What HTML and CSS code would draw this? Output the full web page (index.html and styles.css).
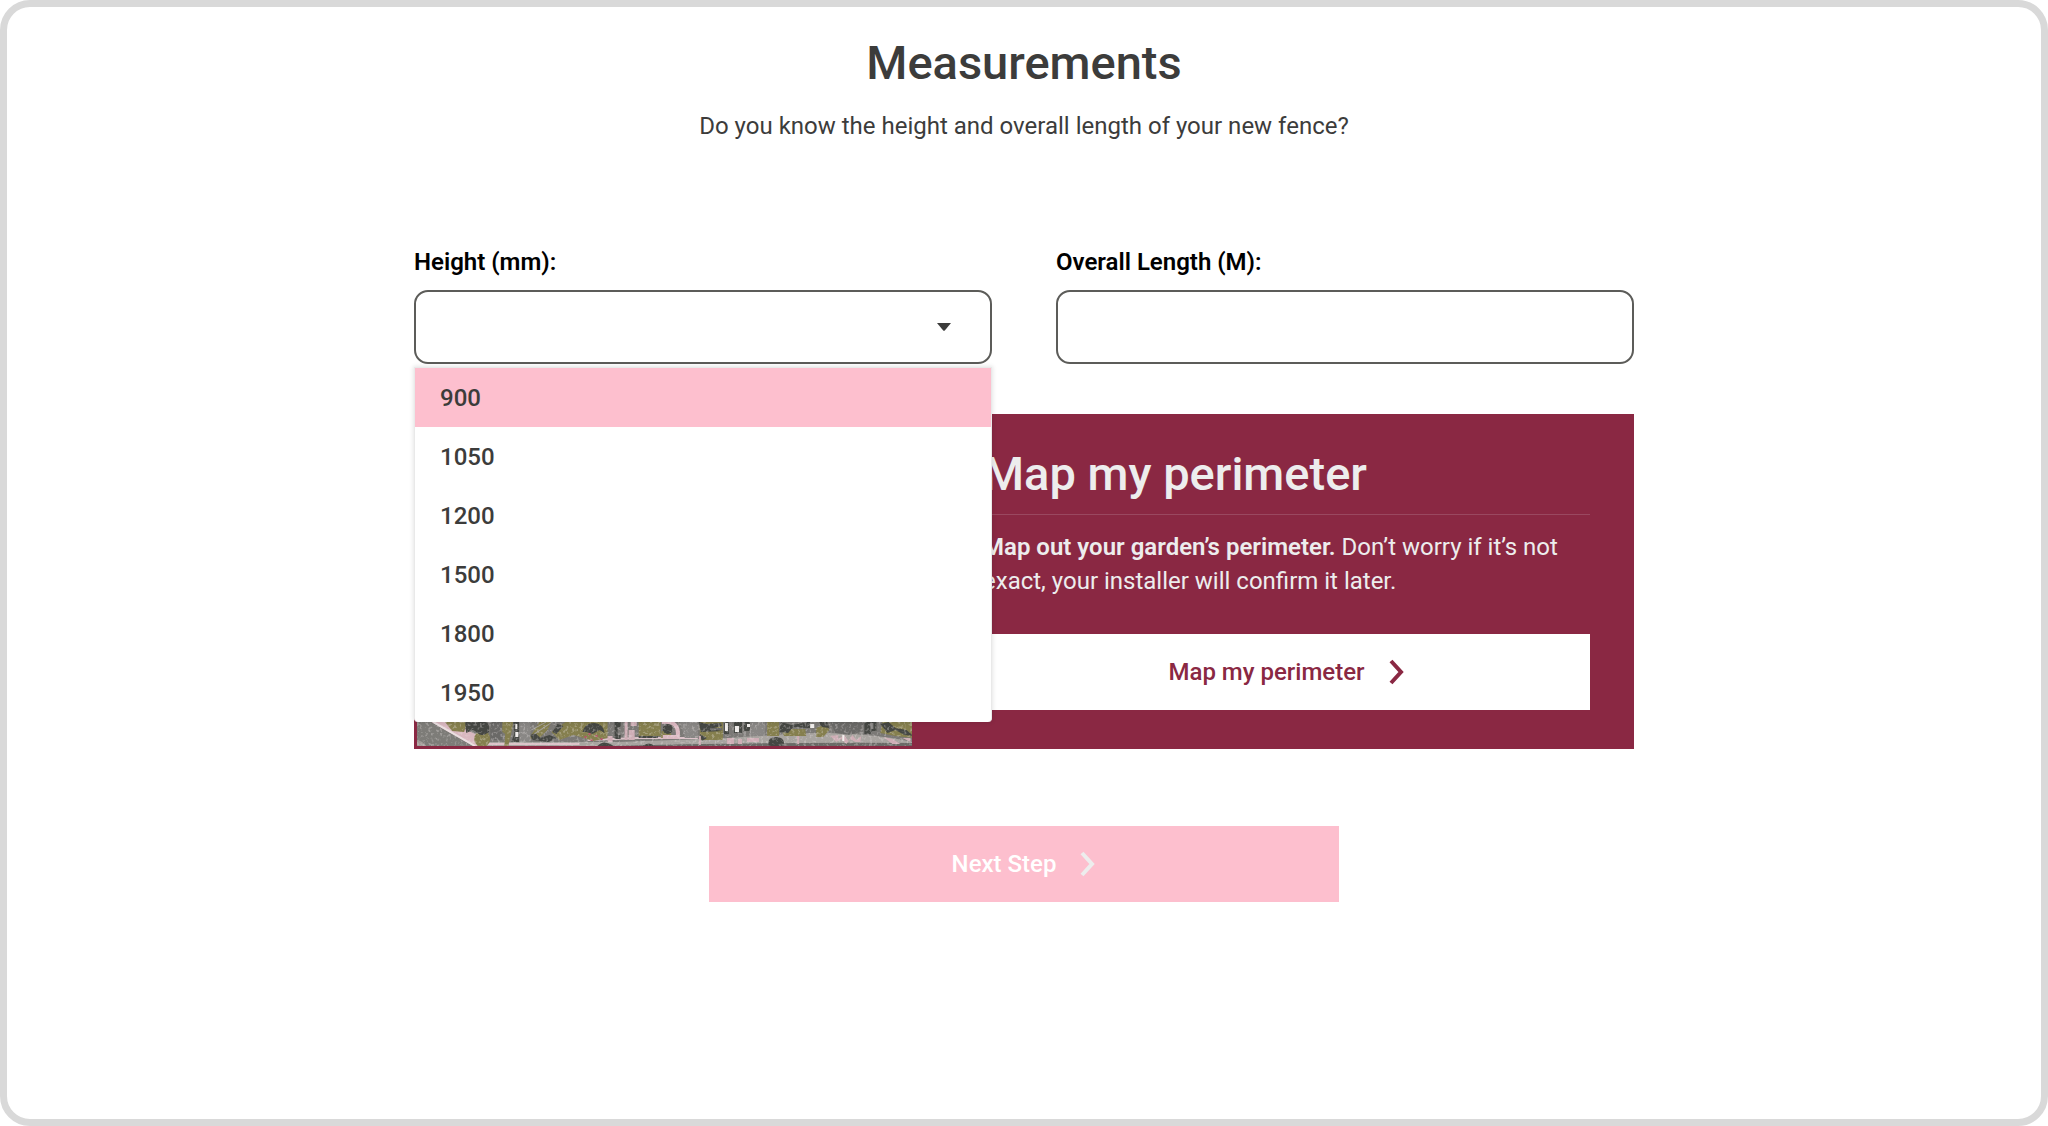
FILE: index.html
```html
<!DOCTYPE html>
<html lang="en">
<head>
    <meta charset="UTF-8">
    <meta name="viewport" content="width=device-width, initial-scale=1.0">
    <title>Measurements</title>
    <link rel="stylesheet" href="styles.css">
</head>
<body>
<main class="page">
    <h1>Measurements</h1>
    <p class="intro">Do you know the height and overall length of your new fence?</p>
    <form id="measurements-form" class="measurements">
        <div class="fields">
            <div class="field">
                <label for="height">Height (mm):</label>
                <div class="select-wrap">
                    <select id="height" name="height">
                        <option value="" selected></option>
                        <option>900</option>
                        <option>1050</option>
                        <option>1200</option>
                        <option>1500</option>
                        <option>1800</option>
                        <option>1950</option>
                    </select>
                    <svg class="arrow" viewBox="0 0 14 8" aria-hidden="true"><path d="M0 0h14L8 7.300Q7 8.300 6 7.300Z"/></svg>
                    <ul class="options" id="height-options">
                        <li><button type="button" class="active">900</button></li>
                        <li><button type="button">1050</button></li>
                        <li><button type="button">1200</button></li>
                        <li><button type="button">1500</button></li>
                        <li><button type="button">1800</button></li>
                        <li><button type="button">1950</button></li>
                    </ul>
                </div>
            </div>
            <div class="field">
                <label for="length">Overall Length (M):</label>
                <input type="text" id="length" name="length" inputmode="decimal">
            </div>
        </div>

        <section class="map-card">
            <svg class="aerial" viewBox="0 0 495 328" preserveAspectRatio="xMinYMax slice" aria-hidden="true">
                <defs>
                    <filter id="grain" x="0" y="0" width="100%" height="100%">
                        <feTurbulence type="fractalNoise" baseFrequency="0.35" numOctaves="2" seed="4"/>
                        <feColorMatrix values="0 0 0 0 0.85  0 0 0 0 0.8  0 0 0 0 0.8  5 0 0 0 -2.600"/>
                    </filter>
                </defs>
                <rect width="495" height="328" fill="#7b7976"/>
                <!-- verge beside the diagonal road -->
                <path d="M14 304h20l28 14 1 10h-9z" fill="#d9b8c0"/>
                <path d="M0 304h14l42 24H0z" fill="#7d7c78"/>
                <path d="M16 304l42 24" stroke="#eadfe0" stroke-width="2"/>
                <path d="M0 322q6 1 9 6H0z" fill="#a09a96"/>
                <!-- pavement and street -->
                <path d="M60 324h140l110-4 60-4q70-4 125 8v4H60z" fill="#a8a4a0"/>
                <path d="M62 326h100M170 322l50-2h60" stroke="#dcc3c9" stroke-width="2" fill="none"/>
                <path d="M190 328q150-4 305-3v3z" fill="#6b6a67"/>
                <!-- gardens -->
                <g fill="#857f4e">
                    <path d="M28 304h22l-3 10-12-1z"/>
                    <circle cx="65" cy="321" r="8"/>
                    <path d="M85 304h11l-2 11-3 13h-4l1-12-4-3z"/>
                    <path d="M122 304h12l-4 8-10 10-8-2zM134 314l14-10h42v16l-14 3-20-6-14 5z"/>
                    <path d="M221 304h22v14h-22zM244 313h8l3 7h-12z"/>
                    <path d="M282 304h23v18h-23z"/>
                    <path d="M349 304h12v14h-12zM363 311h24l1 7h-22zM398 310l10-4 3 6-6 7h-7zM464 304h31v16l-18-2-15-3z"/>
                </g>
                <g fill="#454743">
                    <path d="M48 304l22 1 2 9-7 3-9-5-7 3z"/>
                    <circle cx="65" cy="310" r="7"/>
                    <path d="M96 304h6v20h-8l3-8z"/>
                    <path d="M113 317l5-2 5 5 9-3 7 3-8 4-16-2zM140 306l6 2-7 8-4-2z"/>
                    <path d="M165 314q2-9 12-9 9 1 10 10l-5-3-7 4-6-2z"/>
                    <path d="M197 304h6v5h-3v8h3v4h-6zM221 318h19v2h-19z"/>
                    <path d="M180 328q6-7 16 0zM225 328q6-5 12 0z"/>
                    <circle cx="250" cy="311" r="5"/>
                    <path d="M281 304l8 2 14-1 1 3-12 3 13 2-22 1zM282 316l7 4-5 3z"/>
                    <path d="M306 304h5v12h-5zM316 304h8v11h-8zM326 304h6v9h-6z"/>
                    <path d="M350 326q0-7 8-7t8 7l-3 2h-11z"/>
                    <path d="M363 304l10 3 13-2 2 5-13-1-5 6-9-1zM388 304h4v6h-4zM400 304h9l2 6-7-1z"/>
                    <path d="M446 304h12v9h-4l-2 3h-6zM462 306l8-2 7 6 11 2 7 6-9-1-9-5-8 3z"/>
                </g>
                <g fill="#6a6967">
                    <path d="M73 304h12v18H73zM412 304h34l-5 10-10 3-14-2zM292 310h12v2h-12z"/>
                </g>
                <g fill="#898785">
                    <path d="M102 304h11v20h-11zM262 304h18v16h-13zM332 304h15v14h-15zM452 305h3v6h-3z"/>
                </g>
                <!-- paths and drives -->
                <g fill="#cfaeb6">
                    <path d="M207 304h3v18h-3zM213 304h6v4h-6zM211 312h6v10h-6zM190 318h5v6h-5z"/>
                    <path d="M281 318h2v9h-2zM309 320h7v6h-7zM320 321h4v5h-4zM329 320h12v4h-12zM379 318h2v8h-2z"/>
                    <path d="M412 318l8-1v4l6-4 4 6 4-6 4 5 5-4-1 6h-5l-5-3-4 5-5-5-5 3zM465 319l9 2 8 5h-8zM484 320h8v4z"/>
                </g>
                <path d="M244 304q18-2 16 15h-15" stroke="#dcb9c2" stroke-width="4" fill="none"/>
                <g fill="#f1eeec">
                    <path d="M98 306h2v5h-2zM98 314h3v5h-3zM307 305h3v8h-3zM317 308h4v6h-4zM329 306h3v3h-3zM392 306h4v4h-4zM424 317h2v6h-2z"/>
                </g>
                <path d="M114 312l15-8M117 316l18-12" stroke="#a5a29f" fill="none"/>
                <path d="M167 319h2M173 322h2M178 318h2M183 321h2M171 316h2" stroke="#b6526a" stroke-width="2"/>
                <rect width="495" height="328" filter="url(#grain)" opacity="0.3"/>
            </svg>
            <div class="map-content">
                <h2>Map my perimeter</h2>
                <p><strong>Map out your garden’s perimeter.</strong> Don’t worry if it’s not exact, your installer will confirm it later.</p>
                <button type="button" class="btn btn-map">
                    Map my perimeter
                    <svg class="chevron" viewBox="0 0 16 26" aria-hidden="true"><path d="M2 2l10 11L2 24"/></svg>
                </button>
            </div>
        </section>

        <button type="submit" class="btn btn-next">
            Next Step
            <svg class="chevron" viewBox="0 0 16 26" aria-hidden="true"><path d="M2 2l10 11L2 24"/></svg>
        </button>
    </form>
</main>

<script>
    const select = document.getElementById('height');
    const list = document.getElementById('height-options');

    select.addEventListener('mousedown', function(event) {
        event.preventDefault();
        list.hidden = !list.hidden;
    });

    list.addEventListener('click', function(event) {
        const option = event.target.closest('button');
        if (!option) {
            return;
        }
        list.querySelector('.active').classList.remove('active');
        option.classList.add('active');
        select.value = option.textContent;
        list.hidden = true;
    });

    document.getElementById('measurements-form').addEventListener('submit', function(event) {
        event.preventDefault();
    });
</script>
</body>
</html>
```
FILE: styles.css
```css
* {
    box-sizing: border-box;
}
body {
    margin: 0;
    background: #ffffff;
    color: #3c3c3b;
    font-family: Roboto, sans-serif;
    font-size: 24px;
    line-height: 34px;
}
.page {
    min-height: 100vh;
    padding: 28px 24px;
    border: 7px solid #d9d9d9;
    border-radius: 30px;
}
h1, h2, p {
    margin: 0;
}
h1, h2 {
    font-size: 47px;
    line-height: 56px;
    font-weight: 500;
}
h1 {
    text-align: center;
}
.intro {
    margin-top: 18px;
    text-align: center;
}
.measurements {
    max-width: 1220px;
    margin: 102px auto 0;
}
.fields {
    display: grid;
    grid-template-columns: 1fr 1fr;
    gap: 64px;
}
.field {
    display: flex;
    flex-direction: column;
    gap: 11px;
}
label {
    color: #000000;
    font-weight: 600;
}
.select-wrap {
    position: relative;
}
select, input {
    display: block;
    width: 100%;
    height: 74px;
    padding: 0 24px;
    border: 2px solid #5c5c59;
    border-radius: 14px;
    background: #ffffff;
    color: #3c3c3b;
    font: inherit;
}
select {
    appearance: none;
}
.arrow {
    position: absolute;
    top: 33px;
    right: 41px;
    width: 14px;
    height: 8px;
    fill: #3c3c3b;
    pointer-events: none;
}

/* open list, lies over the map card */
.options {
    position: absolute;
    top: 100%;
    left: 0;
    right: 0;
    z-index: 1;
    margin: 3px 0 0;
    padding: 0;
    list-style: none;
    background: #ffffff;
    border: 1px solid #e9e9e9;
    border-bottom: none;
    border-radius: 0 0 4px 4px;
    box-shadow: 0 0 4px 1px rgba(0, 0, 0, 0.1);
}
.options[hidden] {
    display: none;
}
.options button {
    display: block;
    width: 100%;
    height: 59px;
    padding: 0 25px;
    border: none;
    background: none;
    color: #3c3c3b;
    font: inherit;
    font-weight: 500;
    text-align: left;
    cursor: pointer;
}
.options .active,
.options button:hover {
    background: #fdbfce;
}

.map-card {
    display: flex;
    margin-top: 50px;
    padding: 3px;
    background: #8a2843;
    color: #ededed;
}
.aerial {
    flex: 0 1 495px;
    min-width: 0;
    height: auto;
}
.map-content {
    flex: 1;
    padding: 29px 41px 36px 71px;
}
h2 {
    padding-bottom: 12px;
    border-bottom: 1px solid #9a4860;
}
.map-content p {
    margin: 15px 0 36px;
}
strong {
    font-weight: 600;
}

.btn {
    display: flex;
    justify-content: center;
    align-items: center;
    gap: 24px;
    width: 100%;
    height: 76px;
    border: none;
    font: inherit;
    font-weight: 500;
    cursor: pointer;
}
.btn-map {
    background: #ffffff;
    color: #8a2843;
}
.btn-next {
    max-width: 630px;
    margin: 77px auto 0;
    background: #fdbfce;
    color: #ffffff;
}
.chevron {
    width: 16px;
    height: 26px;
    fill: none;
    stroke: currentColor;
    stroke-width: 4;
}
.btn-next .chevron {
    stroke: #ededed;
}
```
